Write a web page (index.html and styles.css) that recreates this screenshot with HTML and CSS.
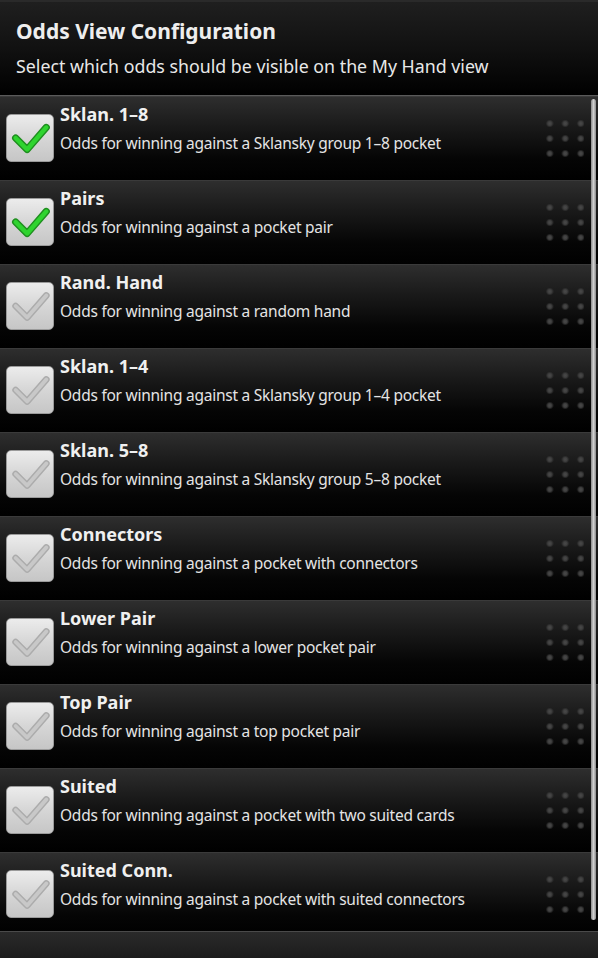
FILE: index.html
```html
<!DOCTYPE html>
<html lang="en">
<head>
  <meta charset="UTF-8" />
  <title>Odds View Configuration</title>
  <link rel="stylesheet" href="styles.css">
</head>
<body>
  <div class="screen">
    <div class="header">
      <h1>Odds View Configuration</h1>
      <p>Select which odds should be visible on the My Hand view</p>
    </div>

    <div class="list">
      <div class="row">
        <div class="box checked">
          <svg viewBox="0 0 48 48"><path class="mark-edge" d="M9 24 L21 36 L41 13" /><path class="mark" d="M9 24 L21 36 L41 13" /></svg>
        </div>
        <div class="text">
          <div class="name">Sklan. 1–8</div>
          <div class="desc">Odds for winning against a Sklansky group 1–8 pocket</div>
        </div>
        <div class="grip"></div>
      </div>

      <div class="row">
        <div class="box checked">
          <svg viewBox="0 0 48 48"><path class="mark-edge" d="M9 24 L21 36 L41 13" /><path class="mark" d="M9 24 L21 36 L41 13" /></svg>
        </div>
        <div class="text">
          <div class="name">Pairs</div>
          <div class="desc">Odds for winning against a pocket pair</div>
        </div>
        <div class="grip"></div>
      </div>

      <div class="row">
        <div class="box">
          <svg viewBox="0 0 48 48"><path class="mark-edge" d="M9 24 L21 36 L41 13" /><path class="mark" d="M9 24 L21 36 L41 13" /></svg>
        </div>
        <div class="text">
          <div class="name">Rand. Hand</div>
          <div class="desc">Odds for winning against a random hand</div>
        </div>
        <div class="grip"></div>
      </div>

      <div class="row">
        <div class="box">
          <svg viewBox="0 0 48 48"><path class="mark-edge" d="M9 24 L21 36 L41 13" /><path class="mark" d="M9 24 L21 36 L41 13" /></svg>
        </div>
        <div class="text">
          <div class="name">Sklan. 1–4</div>
          <div class="desc">Odds for winning against a Sklansky group 1–4 pocket</div>
        </div>
        <div class="grip"></div>
      </div>

      <div class="row">
        <div class="box">
          <svg viewBox="0 0 48 48"><path class="mark-edge" d="M9 24 L21 36 L41 13" /><path class="mark" d="M9 24 L21 36 L41 13" /></svg>
        </div>
        <div class="text">
          <div class="name">Sklan. 5–8</div>
          <div class="desc">Odds for winning against a Sklansky group 5–8 pocket</div>
        </div>
        <div class="grip"></div>
      </div>

      <div class="row">
        <div class="box">
          <svg viewBox="0 0 48 48"><path class="mark-edge" d="M9 24 L21 36 L41 13" /><path class="mark" d="M9 24 L21 36 L41 13" /></svg>
        </div>
        <div class="text">
          <div class="name">Connectors</div>
          <div class="desc">Odds for winning against a pocket with connectors</div>
        </div>
        <div class="grip"></div>
      </div>

      <div class="row">
        <div class="box">
          <svg viewBox="0 0 48 48"><path class="mark-edge" d="M9 24 L21 36 L41 13" /><path class="mark" d="M9 24 L21 36 L41 13" /></svg>
        </div>
        <div class="text">
          <div class="name">Lower Pair</div>
          <div class="desc">Odds for winning against a lower pocket pair</div>
        </div>
        <div class="grip"></div>
      </div>

      <div class="row">
        <div class="box">
          <svg viewBox="0 0 48 48"><path class="mark-edge" d="M9 24 L21 36 L41 13" /><path class="mark" d="M9 24 L21 36 L41 13" /></svg>
        </div>
        <div class="text">
          <div class="name">Top Pair</div>
          <div class="desc">Odds for winning against a top pocket pair</div>
        </div>
        <div class="grip"></div>
      </div>

      <div class="row">
        <div class="box">
          <svg viewBox="0 0 48 48"><path class="mark-edge" d="M9 24 L21 36 L41 13" /><path class="mark" d="M9 24 L21 36 L41 13" /></svg>
        </div>
        <div class="text">
          <div class="name">Suited</div>
          <div class="desc">Odds for winning against a pocket with two suited cards</div>
        </div>
        <div class="grip"></div>
      </div>

      <div class="row">
        <div class="box">
          <svg viewBox="0 0 48 48"><path class="mark-edge" d="M9 24 L21 36 L41 13" /><path class="mark" d="M9 24 L21 36 L41 13" /></svg>
        </div>
        <div class="text">
          <div class="name">Suited Conn.</div>
          <div class="desc">Odds for winning against a pocket with suited connectors</div>
        </div>
        <div class="grip"></div>
      </div>

      <div class="scrollbar"></div>
    </div>

    <div class="footer"></div>
  </div>
</body>
</html>
```

FILE: styles.css
```css
body {
  margin: 0;
  background: #000;
  font-family: "Noto Sans", "Open Sans", sans-serif;
  color: #f0f0f0;
}

.screen {
  width: 598px;
  height: 958px;
  overflow: hidden;
  display: flex;
  flex-direction: column;
}

.header {
  height: 96px;
  flex: none;
  box-sizing: border-box;
  padding: 14px 16px 0;
  background: linear-gradient(#1f1f1f, #111 50%, #000);
  border-top: 2px solid #2a2a2a;
  border-bottom: 1px solid #5a5a5a;
}

.header h1 {
  margin: 0;
  font-size: 21px;
  line-height: 30px;
  font-weight: bold;
  color: #eee;
}

.header p {
  margin: 7px 0 0;
  font-size: 17.8px;
  line-height: 26px;
  color: #e8e8e8;
}

.list {
  position: relative;
  flex: none;
  height: 835px;
  overflow: hidden;
}

.row {
  height: 84px;
  box-sizing: border-box;
  display: flex;
  align-items: center;
  border-top: 1px solid #3a3a3a;
  background: linear-gradient(#2e2e2e, #1a1a1a 35%, #050505 75%, #000);
}

.box {
  flex: none;
  width: 48px;
  height: 48px;
  margin-left: 6px;
  margin-top: -1px;
  box-sizing: border-box;
  border-radius: 5px;
  border: 1px solid #9a9a9a;
  background: linear-gradient(#ececec, #d6d6d6 50%, #c6c6c6);
}

.box svg {
  display: block;
  width: 46px;
  height: 46px;
}

.box path {
  fill: none;
  stroke-linecap: round;
  stroke-linejoin: round;
}

.box .mark-edge {
  stroke: #acacac;
  stroke-width: 7;
}

.box .mark {
  stroke: #c8c8c8;
  stroke-width: 4;
}

.box.checked .mark-edge {
  stroke: #1f8f1f;
  stroke-width: 7.5;
}

.box.checked .mark {
  stroke: #2fd42f;
  stroke-width: 4.5;
}

.text {
  flex: 1;
  align-self: flex-start;
  padding-top: 5px;
  margin-left: 6px;
  min-width: 0;
}

.name {
  font-size: 18px;
  line-height: 24px;
  font-weight: bold;
  color: #f0f0f0;
}

.desc {
  margin-top: 5px;
  font-size: 15.5px;
  letter-spacing: -0.25px;
  line-height: 24px;
  color: #e4e4e4;
}

.grip {
  flex: none;
  width: 38px;
  height: 38px;
  margin-right: 14px;
  background-image: radial-gradient(circle, #4a4a4a 0, #3e3e3e 2px, rgba(50, 50, 50, 0) 4px);
  background-size: 15.5px 15px;
  background-position: -4px -4px;
}

.scrollbar {
  position: absolute;
  right: 2px;
  top: 3px;
  bottom: 11px;
  width: 5px;
  border-radius: 3px;
  background: linear-gradient(90deg, #8a8a8a, #d0d0d0 50%, #8a8a8a);
}

.footer {
  flex: 1;
  border-top: 1px solid #4a4a4a;
  background: linear-gradient(#2a2a2a, #1c1c1c);
}
```
